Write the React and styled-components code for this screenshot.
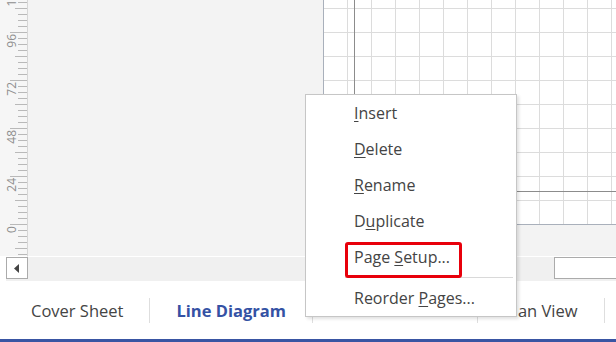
import styled, { createGlobalStyle } from 'styled-components'

const GlobalStyle = createGlobalStyle`
  html, body {
    margin: 0;
    padding: 0;
    width: 616px;
    height: 342px;
    overflow: hidden;
    background: #ffffff;
  }
  * {
    box-sizing: border-box;
  }
`

const Window = styled.div`
  position: relative;
  width: 616px;
  height: 342px;
  display: flex;
  flex-direction: column;
  font-family: 'Open Sans', 'Noto Sans', sans-serif;
`

const Workspace = styled.div`
  height: 257px;
  display: flex;
`

const RulerBox = styled.div`
  width: 28px;
  height: 257px;
  background: #f6f6f6;
  border-right: 1px solid #d6d6d6;
  border-bottom: 1px solid #ffffff;
  overflow: hidden;
`

const Canvas = styled.div`
  flex: 1;
  display: flex;
  align-items: flex-start;
  padding-left: 295px;
  background: #f3f3f3;
  border-bottom: 1px solid #ffffff;
  overflow: hidden;
`

const Page = styled.div`
  flex: 1;
  height: 225px;
  display: flex;
  padding: 0 0 32px 30px;
  background-color: #ffffff;
  background-image:
    linear-gradient(to right, #dcdcdc 1px, transparent 1px),
    linear-gradient(to bottom, #dcdcdc 1px, transparent 1px);
  background-size: 24px 24px;
  background-position: 23px 8px;
  border-left: 1px solid #a9b0bb;
  border-bottom: 1px solid #a9b0bb;
`

const MarginBox = styled.div`
  flex: 1;
  border-left: 1px solid #8c8c8c;
  border-bottom: 1px solid #8c8c8c;
`

const ScrollRow = styled.div`
  height: 24px;
  display: flex;
  align-items: flex-start;
  background: #f0f0f0;
  border-left: 6px solid #ffffff;
`

const ArrowButton = styled.div`
  width: 22px;
  height: 22px;
  display: flex;
  align-items: center;
  justify-content: center;
  background: #ffffff;
  border: 1px solid #ababab;
`

const Track = styled.div`
  flex: 1;
`

const Thumb = styled.div`
  width: 62px;
  height: 22px;
  background: #ffffff;
  border: 1px solid #ababab;
  border-right: none;
`

const TabStrip = styled.div`
  height: 58px;
  display: flex;
  align-items: center;
  padding-left: 5px;
  background: #ffffff;
`

const Tab = styled.div`
  height: 25px;
  padding: 0 26px;
  display: flex;
  align-items: center;
  border-right: 1px solid #dedede;
  font-size: 16.5px;
  font-weight: ${(p) => (p.$active ? 700 : 400)};
  color: ${(p) => (p.$active ? '#3452a4' : '#444444')};
  white-space: nowrap;
`

const BottomBar = styled.div`
  height: 3px;
  background: #3955a3;
`

const Menu = styled.div`
  position: absolute;
  left: 305px;
  top: 94px;
  width: 212px;
  display: flex;
  flex-direction: column;
  background: #ffffff;
  border: 1px solid #c6c6c6;
  box-shadow: 2px 2px 3px rgba(0, 0, 0, 0.12);
`

const MenuItem = styled.div`
  position: relative;
  height: 36px;
  display: flex;
  align-items: center;
  padding-left: 48px;
  font-size: 16px;
  color: #444444;
  white-space: pre;

  u {
    text-underline-offset: 2px;
  }
`

const Separator = styled.div`
  height: 1px;
  margin: 2px 3px 2px 39px;
  background: #d9d9d9;
`

const Highlight = styled.div`
  position: absolute;
  left: 39px;
  top: 3px;
  width: 117px;
  height: 36px;
  border: 3px solid #e8000b;
  border-radius: 3px;
`

const Ruler = () => {
  const ticks = []
  for (let k = -6; k <= 40; k++) {
    const y = 224 - k * 6 + 0.5
    const major = k % 8 === 0
    const mid = !major && k % 4 === 0
    const x1 = major ? 10 : mid ? 15 : 18
    ticks.push(<line key={k} x1={x1} x2={27} y1={y} y2={y} stroke="#b9b9b9" strokeWidth="1" />)
  }
  const labels = [0, 24, 48, 72, 96, 120]
  return (
    <RulerBox>
      <svg width="27" height="256" viewBox="0 0 27 256">
        {ticks}
        {labels.map((v, i) => (
          <text
            key={v}
            transform={`translate(15.5 ${224 - i * 48 + 2}) rotate(-90)`}
            textAnchor="end"
            fontSize="12"
            fontFamily="'Open Sans', sans-serif"
            fill="#8e8e8e"
          >
            {v}
          </text>
        ))}
      </svg>
    </RulerBox>
  )
}

export default function App() {
  return (
    <>
      <GlobalStyle />
      <Window>
        <Workspace>
          <Ruler />
          <Canvas>
            <Page>
              <MarginBox />
            </Page>
          </Canvas>
        </Workspace>
        <ScrollRow>
          <ArrowButton>
            <svg width="6" height="9" viewBox="0 0 6 9">
              <path d="M5 0 L0 4.5 L5 9 Z" fill="#444" />
            </svg>
          </ArrowButton>
          <Track />
          <Thumb />
        </ScrollRow>
        <TabStrip>
          <Tab>Cover Sheet</Tab>
          <Tab $active>Line Diagram</Tab>
          <Tab>Isometric View</Tab>
          <Tab>Plan View</Tab>
        </TabStrip>
        <BottomBar />

        <Menu>
          <MenuItem><span><u>I</u>nsert</span></MenuItem>
          <MenuItem><span><u>D</u>elete</span></MenuItem>
          <MenuItem><span><u>R</u>ename</span></MenuItem>
          <MenuItem><span>D<u>u</u>plicate</span></MenuItem>
          <MenuItem>
            <span>Page <u>S</u>etup...</span>
            <Highlight />
          </MenuItem>
          <Separator />
          <MenuItem><span>Reorder <u>P</u>ages...</span></MenuItem>
        </Menu>
      </Window>
    </>
  )
}
